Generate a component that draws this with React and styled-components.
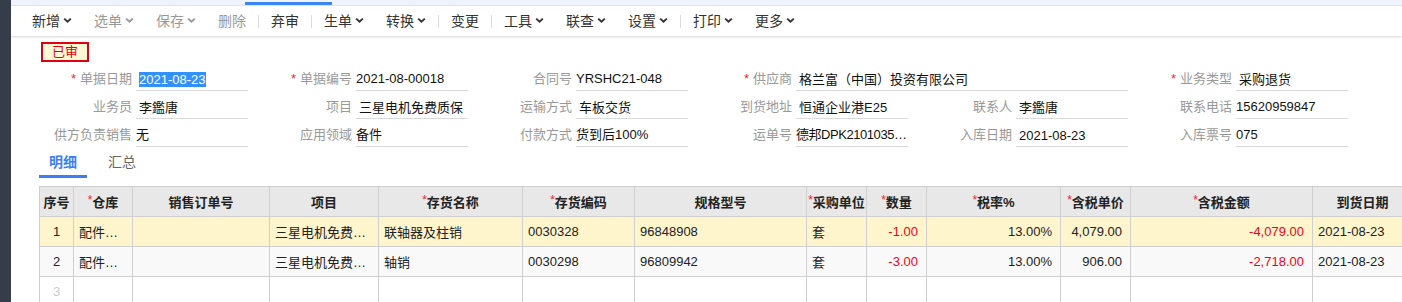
import React from 'react'
import styled, { createGlobalStyle } from 'styled-components'

const GlobalStyle = createGlobalStyle`
  body {
    margin: 0;
    background: #fff;
    overflow: hidden;
    font-family: 'Liberation Sans', 'Noto Sans CJK SC', sans-serif;
    color: #222;
  }
`

const Page = styled.div`
  display: flex;
  width: 1402px;
  height: 302px;
  overflow: hidden;
`
const SideBar = styled.div`
  width: 11px;
  flex: none;
  background: #343d49;
`
const Main = styled.div`
  flex: 1;
  min-width: 0;
  overflow: hidden;
  display: flex;
  flex-direction: column;
`
const TopStrip = styled.div`
  height: 5px;
  flex: none;
  background: #eef3fd;
  border-bottom: 1px solid #dfe4ee;
  display: flex;
  align-items: flex-end;
`
const ActiveMark = styled.div`
  margin-left: 234px;
  width: 87px;
  height: 3px;
  background: #3b86f2;
`
const Toolbar = styled.div`
  height: 30px;
  flex: none;
  display: flex;
  align-items: center;
  padding-left: 10px;
  box-shadow: 0 1px 2px rgba(0, 0, 0, 0.16);
  position: relative;
  z-index: 1;
`
const ToolItem = styled.div`
  display: flex;
  align-items: center;
  gap: 3px;
  padding: 0 11px;
  font-size: 14px;
  line-height: 30px;
  color: ${(p) => (p.disabled ? '#999' : '#333')};
  white-space: nowrap;
`
const Sep = styled.div`
  width: 1px;
  height: 13px;
  margin: 0 1px;
  background: #dcdcdc;
`

const Chevron = ({ color }) => (
  <svg width="9" height="7" viewBox="0 0 9 7" style={{ marginTop: -2 }}>
    <path d="M1.2 1.6 L4.5 4.8 L7.8 1.6" fill="none" stroke={color} strokeWidth="1.9" />
  </svg>
)

const FormArea = styled.div`
  padding: 6px 0 0 17px;
`
const Badge = styled.div`
  margin-left: 13px;
  width: 48px;
  height: 20px;
  box-sizing: border-box;
  border: 2px solid #e0000f;
  background: #fff8d4;
  color: #e0000f;
  font-size: 13px;
  line-height: 16px;
  text-align: center;
`
const FormGrid = styled.div`
  margin-top: 5px;
  display: grid;
  grid-template-columns: repeat(6, 220px);
  grid-auto-rows: 24px;
  row-gap: 4px;
`
const Field = styled.div`
  display: flex;
  gap: 4px;
  grid-column: ${(p) => (p.span ? `span ${p.span}` : 'auto')};
`
const Label = styled.div`
  width: 104px;
  flex: none;
  text-align: right;
  font-size: 13px;
  line-height: 24px;
  color: #999;
  white-space: nowrap;
`
const Req = styled.span`
  color: #f5222d;
  margin-right: 4px;
`
const Value = styled.div`
  flex: 1;
  min-width: 0;
  box-sizing: border-box;
  border-bottom: 1px solid #d9d9d9;
  font-size: 13px;
  line-height: ${(p) => (p.input ? '25px' : '23px')};
  padding-left: ${(p) => (p.input ? '3px' : '0')};
  letter-spacing: ${(p) => (p.condensed ? '-0.45px' : 'normal')};
  color: #111;
  white-space: nowrap;
  overflow: hidden;
`
const Selected = styled.span`
  background: #3390ff;
  color: #fff;
`

const Tabs = styled.div`
  margin: 3px 0 0 28px;
  display: flex;
  gap: 11px;
`
const Tab = styled.div`
  height: 28px;
  box-sizing: border-box;
  padding: 0 10px;
  font-size: 14px;
  line-height: 25px;
  font-weight: ${(p) => (p.active ? 'bold' : 'normal')};
  color: ${(p) => (p.active ? '#3d7ff2' : '#666')};
  border-bottom: 3px solid ${(p) => (p.active ? '#3d7ff2' : 'transparent')};
`

const TableWrap = styled.div`
  margin: 8px 0 0 28px;
`
const Table = styled.table`
  border-collapse: collapse;
  table-layout: fixed;
  font-size: 13px;
  flex: none;
`
const Th = styled.th`
  height: 29px;
  padding: 0;
  border: 1px solid #cfcfcf;
  background: #e8e8e8;
  font-weight: bold;
  color: #222;
  text-align: center;
  white-space: nowrap;
  overflow: hidden;
`
const ThReq = styled.span`
  color: #f5222d;
  font-weight: normal;
  font-size: 12px;
  vertical-align: 3px;
`
const Tr = styled.tr`
  background: ${(p) => p.bg};
`
const Td = styled.td`
  height: 29px;
  padding: ${(p) => (p.align === 'right' ? '0 8px 0 0' : p.align === 'center' ? '0' : '0 0 0 5px')};
  border: 1px solid #cfcfcf;
  text-align: ${(p) => p.align || 'left'};
  color: ${(p) => (p.tone === 'red' ? '#f5000f' : p.tone === 'muted' ? '#ccc' : '#222')};
  white-space: nowrap;
  overflow: hidden;
`

const tools = [
  { t: '新增', menu: true },
  { t: '选单', menu: true, disabled: true },
  { t: '保存', menu: true, disabled: true },
  { t: '删除', disabled: true },
  'sep',
  { t: '弃审' },
  'sep',
  { t: '生单', menu: true },
  { t: '转换', menu: true },
  'sep',
  { t: '变更' },
  'sep',
  { t: '工具', menu: true },
  { t: '联查', menu: true },
  { t: '设置', menu: true },
  'sep',
  { t: '打印', menu: true },
  { t: '更多', menu: true },
]

const fields = [
  { label: '单据日期', req: true, value: '2021-08-23', input: true, selected: true },
  { label: '单据编号', req: true, value: '2021-08-00018' },
  { label: '合同号', value: 'YRSHC21-048' },
  { label: '供应商', req: true, value: '格兰富（中国）投资有限公司', input: true, span: 2 },
  { label: '业务类型', req: true, value: '采购退货', input: true },
  { label: '业务员', value: '李鑑唐', input: true },
  { label: '项目', value: '三星电机免费质保', input: true },
  { label: '运输方式', value: '车板交货', input: true },
  { label: '到货地址', value: '恒通企业港E25', input: true },
  { label: '联系人', value: '李鑑唐', input: true },
  { label: '联系电话', value: '15620959847' },
  { label: '供方负责销售', value: '无' },
  { label: '应用领域', value: '备件' },
  { label: '付款方式', value: '货到后100%' },
  { label: '运单号', value: '德邦DPK2101035…', condensed: true },
  { label: '入库日期', value: '2021-08-23', input: true },
  { label: '入库票号', value: '075' },
]

const cols = [
  { title: '序号', w: 34, align: 'center' },
  { title: '仓库', req: true, w: 59 },
  { title: '销售订单号', w: 137 },
  { title: '项目', w: 109 },
  { title: '存货名称', req: true, w: 144 },
  { title: '存货编码', req: true, w: 112 },
  { title: '规格型号', w: 172 },
  { title: '采购单位', req: true, w: 60 },
  { title: '数量', req: true, w: 60, align: 'right', red: true },
  { title: '税率%', req: true, w: 134, align: 'right' },
  { title: '含税单价', req: true, w: 70, align: 'right' },
  { title: '含税金额', req: true, w: 182, align: 'right', red: true },
  { title: '到货日期', w: 100 },
]
const tableWidth = cols.reduce((s, c) => s + c.w, 0)

const rows = [
  { bg: '#fff5cc', cells: ['1', '配件…', '', '三星电机免费…', '联轴器及柱销', '0030328', '96848908', '套', '-1.00', '13.00%', '4,079.00', '-4,079.00', '2021-08-23'] },
  { bg: '#f9f9f9', cells: ['2', '配件…', '', '三星电机免费…', '轴销', '0030298', '96809942', '套', '-3.00', '13.00%', '906.00', '-2,718.00', '2021-08-23'] },
  { bg: '#fff', cells: ['3', '', '', '', '', '', '', '', '', '', '', '', ''], muted: true },
]

export default function App() {
  return (
    <>
      <GlobalStyle />
      <Page>
        <SideBar />
        <Main>
          <TopStrip>
            <ActiveMark />
          </TopStrip>
          <Toolbar>
            {tools.map((it, i) =>
              it === 'sep' ? (
                <Sep key={i} />
              ) : (
                <ToolItem key={i} disabled={it.disabled}>
                  {it.t}
                  {it.menu && <Chevron color={it.disabled ? '#999' : '#333'} />}
                </ToolItem>
              )
            )}
          </Toolbar>

          <FormArea>
            <Badge>已审</Badge>
            <FormGrid>
              {fields.map((f, i) => (
                <Field key={i} span={f.span}>
                  <Label>
                    {f.req && <Req>*</Req>}
                    {f.label}
                  </Label>
                  <Value input={f.input} condensed={f.condensed}>
                    {f.selected ? <Selected>{f.value}</Selected> : f.value}
                  </Value>
                </Field>
              ))}
            </FormGrid>
          </FormArea>

          <Tabs>
            <Tab active>明细</Tab>
            <Tab>汇总</Tab>
          </Tabs>

          <TableWrap>
            <Table style={{ width: tableWidth }}>
              <colgroup>
                {cols.map((c, i) => (
                  <col key={i} style={{ width: c.w }} />
                ))}
              </colgroup>
              <thead>
                <tr>
                  {cols.map((c, i) => (
                    <Th key={i}>
                      {c.req && <ThReq>*</ThReq>}
                      {c.title}
                    </Th>
                  ))}
                </tr>
              </thead>
              <tbody>
                {rows.map((r, ri) => (
                  <Tr key={ri} bg={r.bg}>
                    {r.cells.map((v, ci) => (
                      <Td
                        key={ci}
                        align={cols[ci].align}
                        tone={r.muted ? 'muted' : cols[ci].red ? 'red' : undefined}
                      >
                        {v}
                      </Td>
                    ))}
                  </Tr>
                ))}
              </tbody>
            </Table>
          </TableWrap>
        </Main>
      </Page>
    </>
  )
}
